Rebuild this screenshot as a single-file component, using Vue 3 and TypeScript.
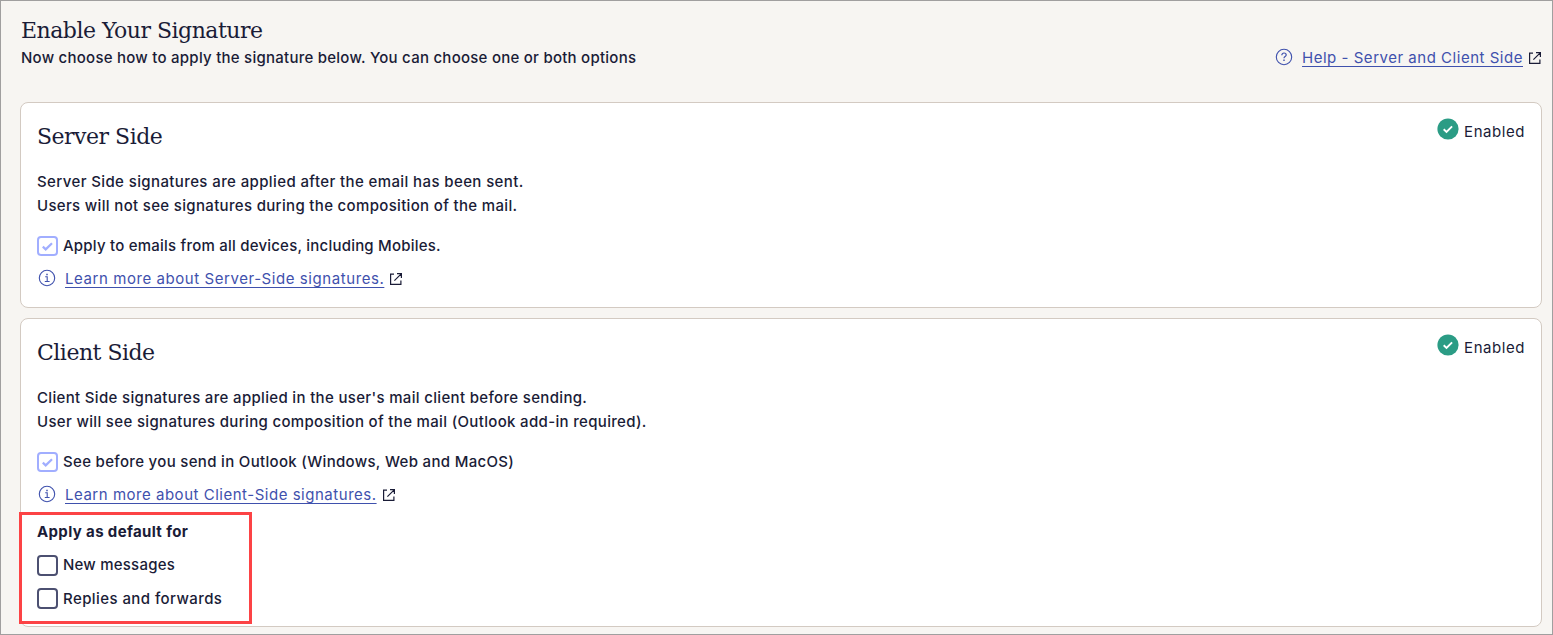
<script setup lang="ts">
import { ref } from 'vue'

interface SignatureOption {
  id: 'server' | 'client'
  title: string
  lines: string[]
  label: string
  link: string
}

const options: SignatureOption[] = [
  {
    id: 'server',
    title: 'Server Side',
    lines: [
      'Server Side signatures are applied after the email has been sent.',
      'Users will not see signatures during the composition of the mail.',
    ],
    label: 'Apply to emails from all devices, including Mobiles.',
    link: 'Learn more about Server-Side signatures.',
  },
  {
    id: 'client',
    title: 'Client Side',
    lines: [
      "Client Side signatures are applied in the user's mail client before sending.",
      'User will see signatures during composition of the mail (Outlook add-in required).',
    ],
    label: 'See before you send in Outlook (Windows, Web and MacOS)',
    link: 'Learn more about Client-Side signatures.',
  },
]

const newMessages = ref(false)
const replies = ref(false)
</script>

<template>
  <main class="page">
    <header class="header">
      <div class="header__text">
        <h1 class="title">Enable Your Signature</h1>
        <p class="header__sub">Now choose how to apply the signature below. You can choose one or both options</p>
      </div>
      <div class="help">
        <svg class="help__icon" viewBox="0 0 18 18" fill="none" stroke="currentColor">
          <circle cx="9" cy="9" r="7.7" stroke-width="1.1" />
          <path d="M6.8 7.2c0-1.4 1-2.2 2.2-2.2s2.2.8 2.2 2c0 1.6-2.2 1.5-2.2 3.2" stroke-width="1.2" />
          <path d="M9 11.6v1.4" stroke-width="1.4" />
        </svg>
        <a class="link link--help" href="#">Help - Server and Client Side</a>
        <svg class="external" viewBox="0 0 14 14" fill="none" stroke="currentColor" stroke-width="1.2">
          <path d="M5 2.1H1.6v10.3h10.3V8.4M8 1.6h4.4V6M12.2 1.8 5.4 8.6" />
        </svg>
      </div>
    </header>

    <section v-for="option in options" :key="option.id" class="card" :class="`card--${option.id}`">
      <div class="card__head">
        <h2 class="title">{{ option.title }}</h2>
        <div class="status">
          <svg class="status__icon" viewBox="0 0 22 22" fill="none">
            <circle cx="11" cy="11" r="10.6" fill="#2b9c85" />
            <path d="m6.7 11.2 2.8 2.7 5.6-5.6" stroke="#fff" stroke-width="1.9" />
          </svg>
          <span class="status__text">Enabled</span>
        </div>
      </div>

      <p class="card__text">
        <span v-for="line in option.lines" :key="line" class="card__line">{{ line }}</span>
      </p>

      <label class="check check--locked">
        <input class="check__input" type="checkbox" checked disabled />
        <span class="check__box">
          <svg class="check__mark" viewBox="0 0 21 21" fill="none" stroke="currentColor" stroke-width="2.2">
            <path d="m5.8 10.6 2.9 2.8 6.3-6.2" />
          </svg>
        </span>
        <span class="check__label">{{ option.label }}</span>
      </label>

      <div class="more">
        <svg class="more__icon" viewBox="0 0 18 18" fill="none" stroke="currentColor">
          <circle cx="9" cy="9" r="7.7" stroke-width="1.1" />
          <path d="M7.2 7.8h2v4.6M6.8 12.5h4.8" stroke-width="1.1" />
          <path d="M9 4.7v1.5" stroke-width="1.5" />
        </svg>
        <a class="link link--more" href="#">{{ option.link }}</a>
        <svg class="external" viewBox="0 0 14 14" fill="none" stroke="currentColor" stroke-width="1.2">
          <path d="M5 2.1H1.6v10.3h10.3V8.4M8 1.6h4.4V6M12.2 1.8 5.4 8.6" />
        </svg>
      </div>

      <div v-if="option.id === 'client'" class="defaults">
        <h3 class="defaults__title">Apply as default for</h3>
        <label class="check check--new">
          <input v-model="newMessages" class="check__input" type="checkbox" />
          <span class="check__box">
            <svg v-if="newMessages" class="check__mark" viewBox="0 0 21 21" fill="none" stroke="currentColor" stroke-width="2">
              <path d="m5.8 10.8 2.9 2.8 6.3-6.2" />
            </svg>
          </span>
          <span class="check__label">New messages</span>
        </label>
        <label class="check check--replies">
          <input v-model="replies" class="check__input" type="checkbox" />
          <span class="check__box">
            <svg v-if="replies" class="check__mark" viewBox="0 0 21 21" fill="none" stroke="currentColor" stroke-width="2">
              <path d="m5.8 10.8 2.9 2.8 6.3-6.2" />
            </svg>
          </span>
          <span class="check__label">Replies and forwards</span>
        </label>
      </div>
    </section>
  </main>
</template>

<style>
body {
  margin: 0;
}
</style>

<style scoped>
.page {
  box-sizing: border-box;
  height: 635px;
  padding: 12px 10px 0 19px;
  border: 1px solid #a09f9f;
  background: #f7f5f2;
  color: #1a1c37;
  font: 450 15px/24px Inter, 'Liberation Sans', sans-serif;
  letter-spacing: 0.22px;
  white-space: nowrap;
}

.title {
  margin: 0;
  font: 400 22px/36px 'DejaVu Serif', serif;
  letter-spacing: -0.5px;
}

.header {
  display: flex;
  justify-content: space-between;
  align-items: flex-end;
  height: 57px;
  margin-bottom: 32px;
}

.header__text {
  padding-left: 1px;
}

.header .title {
  line-height: 32px;
}

.header__sub {
  margin: -1px 0 0;
  letter-spacing: 0.25px;
}

.help {
  display: flex;
  align-items: center;
}

.help__icon,
.more__icon {
  width: 18px;
  height: 18px;
  color: #3f51ad;
}

.help__icon {
  margin: -2px 9px 0 0;
}

.link {
  color: #3f51ad;
  font-weight: 400;
  letter-spacing: 0.52px;
  text-decoration: underline;
  text-decoration-thickness: 1px;
  text-decoration-skip-ink: none;
  text-underline-offset: 3px;
}

.card--server .link {
  letter-spacing: 0.57px;
}

.external {
  width: 14px;
  height: 14px;
  margin-left: 5px;
}

.card {
  box-sizing: border-box;
  height: 206px;
  margin-bottom: 10px;
  padding: 16px;
  border: 1px solid #d3cac2;
  border-radius: 8px;
  background: #fff;
}

.card--client {
  height: 309px;
}

.card__head {
  display: flex;
  justify-content: space-between;
  align-items: flex-start;
}

.status {
  display: flex;
}

.status__icon {
  width: 22px;
  height: 22px;
  margin: -1px 5px 0 0;
}

.status__text {
  margin-top: 1px;
  font-weight: 400;
  letter-spacing: 0.55px;
}

.card__text {
  margin: 15px 0 16px;
}

.card__line {
  display: block;
  letter-spacing: 0.33px;
}

.card--server .card__line:first-child {
  letter-spacing: 0.39px;
}

.check {
  display: flex;
  align-items: center;
  height: 24px;
}

.check__input {
  position: absolute;
  opacity: 0;
}

.check__box {
  box-sizing: border-box;
  width: 21px;
  height: 21px;
  margin-right: 5px;
  border: 2px solid #4c5071;
  border-radius: 4px;
}

.check__mark {
  display: block;
  width: 21px;
  height: 21px;
  margin: -2px;
}

.check--locked .check__box {
  height: 20px;
  border-color: #a1aeff;
  color: #a1aeff;
}

.card--client .check--locked {
  letter-spacing: 0.32px;
}

.more {
  display: flex;
  align-items: center;
  height: 24px;
  margin-top: 9px;
}

.more__icon {
  margin: -2px 9px 0 1px;
}

/* Highlighted group of default toggles */
.defaults {
  position: relative;
  margin-top: 13px;
}

.defaults::before {
  content: '';
  position: absolute;
  box-sizing: border-box;
  top: -8px;
  left: -18px;
  width: 233px;
  height: 112px;
  border: 3px solid #fc4345;
  pointer-events: none;
}

.defaults__title {
  margin: 0 0 9px;
  font-size: 15px;
  font-weight: 700;
  line-height: 24px;
  letter-spacing: 0.36px;
}

.check--replies {
  margin-top: 10px;
  letter-spacing: 0.42px;
}

.check--replies .check__box {
  margin-top: -2px;
}
</style>
